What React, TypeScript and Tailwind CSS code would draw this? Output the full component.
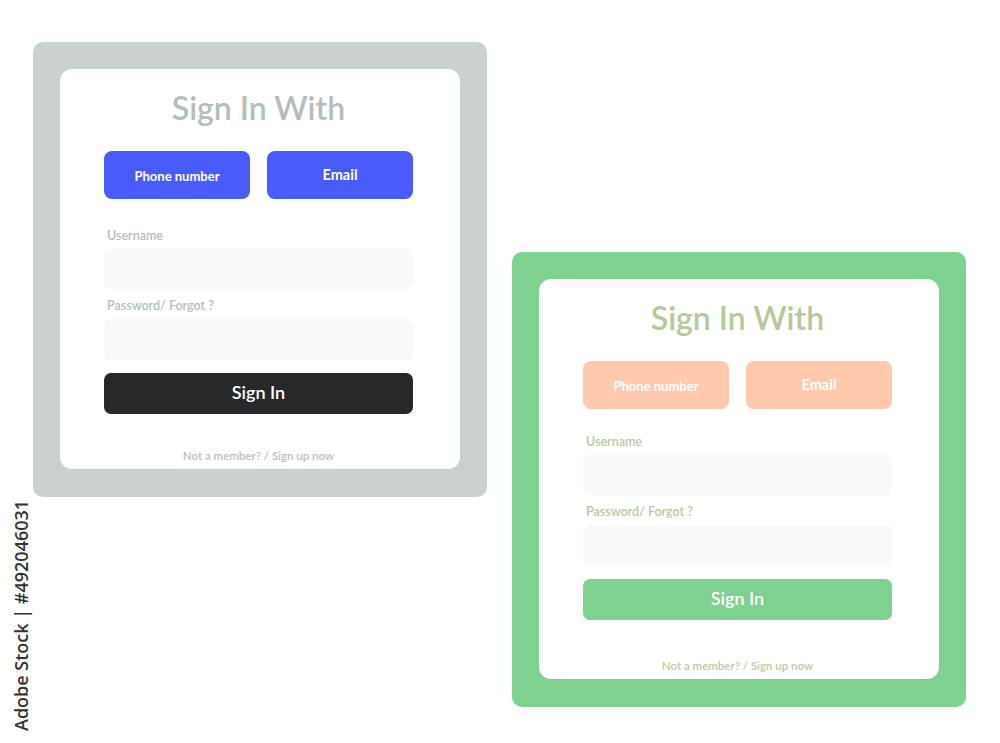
import React from "react";

type Theme = {
  outer: string;
  title: string;
  btn: string;
  label: string;
  submit: string;
  footer: string;
  ml: string;
  mt: string;
  formMt: string;
  footMt: string;
};

const gray: Theme = {
  outer: "bg-[#cbd1d0]",
  title: "text-[#b4bebd]",
  btn: "bg-[#4a5bfb]",
  label: "text-[#b4bdbd]",
  submit: "bg-[#262829]",
  footer: "text-[#b8c0c0]",
  ml: "ml-[33px]",
  mt: "mt-[42px]",
  formMt: "mt-[29px]",
  footMt: "mt-[35px]",
};

const green: Theme = {
  outer: "bg-[#7fd190]",
  title: "text-[#b5c999]",
  btn: "bg-[#fec9ad]",
  label: "text-[#b8c99c]",
  submit: "bg-[#7fd190]",
  footer: "text-[#bccb9f]",
  ml: "ml-[25px]",
  mt: "mt-[252px]",
  formMt: "mt-[25px]",
  footMt: "mt-[39px]",
};

function Card({ t }: { t: Theme }) {
  return (
    <div className={`${t.outer} ${t.ml} ${t.mt} w-[454px] h-[455px] rounded-[10px] p-[27px] shrink-0`}>
      <div className="bg-white rounded-[12px] h-[400px] pl-[44px] pr-[47px] pt-[19px] flex flex-col">
        <h1 className={`${t.title} text-[32px] leading-[40px] font-semibold text-center`}>Sign In With</h1>
        <div className="flex gap-[17px] mt-[23px]">
          <button className={`${t.btn} w-[146px] h-[48px] rounded-[8px] text-white text-[13px] font-bold pt-[3px]`}>Phone number</button>
          <button className={`${t.btn} w-[146px] h-[48px] rounded-[8px] text-white text-[14.5px] font-bold`}>Email</button>
        </div>
        <label className={`${t.label} ${t.formMt} text-[12.5px] leading-[16px] ml-[3px] font-semibold`}>Username</label>
        <div className="bg-[#f9f9f9] h-[40px] rounded-[6px] mt-[5px]" />
        <label className={`${t.label} text-[12.5px] leading-[16px] mt-[9px] ml-[3px] font-semibold`}>Password/ Forgot ?</label>
        <div className="bg-[#f9f9f9] h-[41px] rounded-[6px] mt-[5px]" />
        <button className={`${t.submit} h-[41px] rounded-[7px] text-white text-[18px] font-semibold mt-[13px] pb-[2px]`}>Sign In</button>
        <p className={`${t.footer} ${t.footMt} text-[11.5px] leading-[14px] text-center font-semibold`}>Not a member? / Sign up now</p>
      </div>
    </div>
  );
}

export default function App() {
  return (
    <div className="relative w-[1000px] h-[743px] bg-white overflow-hidden" style={{ fontFamily: "Lato, 'Noto Sans', sans-serif" }}>
      <div className="flex items-start">
        <Card t={gray} />
        <Card t={green} />
      </div>
      <div className="absolute left-[10px] top-[731px] origin-top-left -rotate-90 whitespace-nowrap text-[18px] leading-[22px] text-[#333] font-semibold" style={{ fontFamily: "'Open Sans', sans-serif" }}>
        Adobe Stock | #492046031
      </div>
    </div>
  );
}
